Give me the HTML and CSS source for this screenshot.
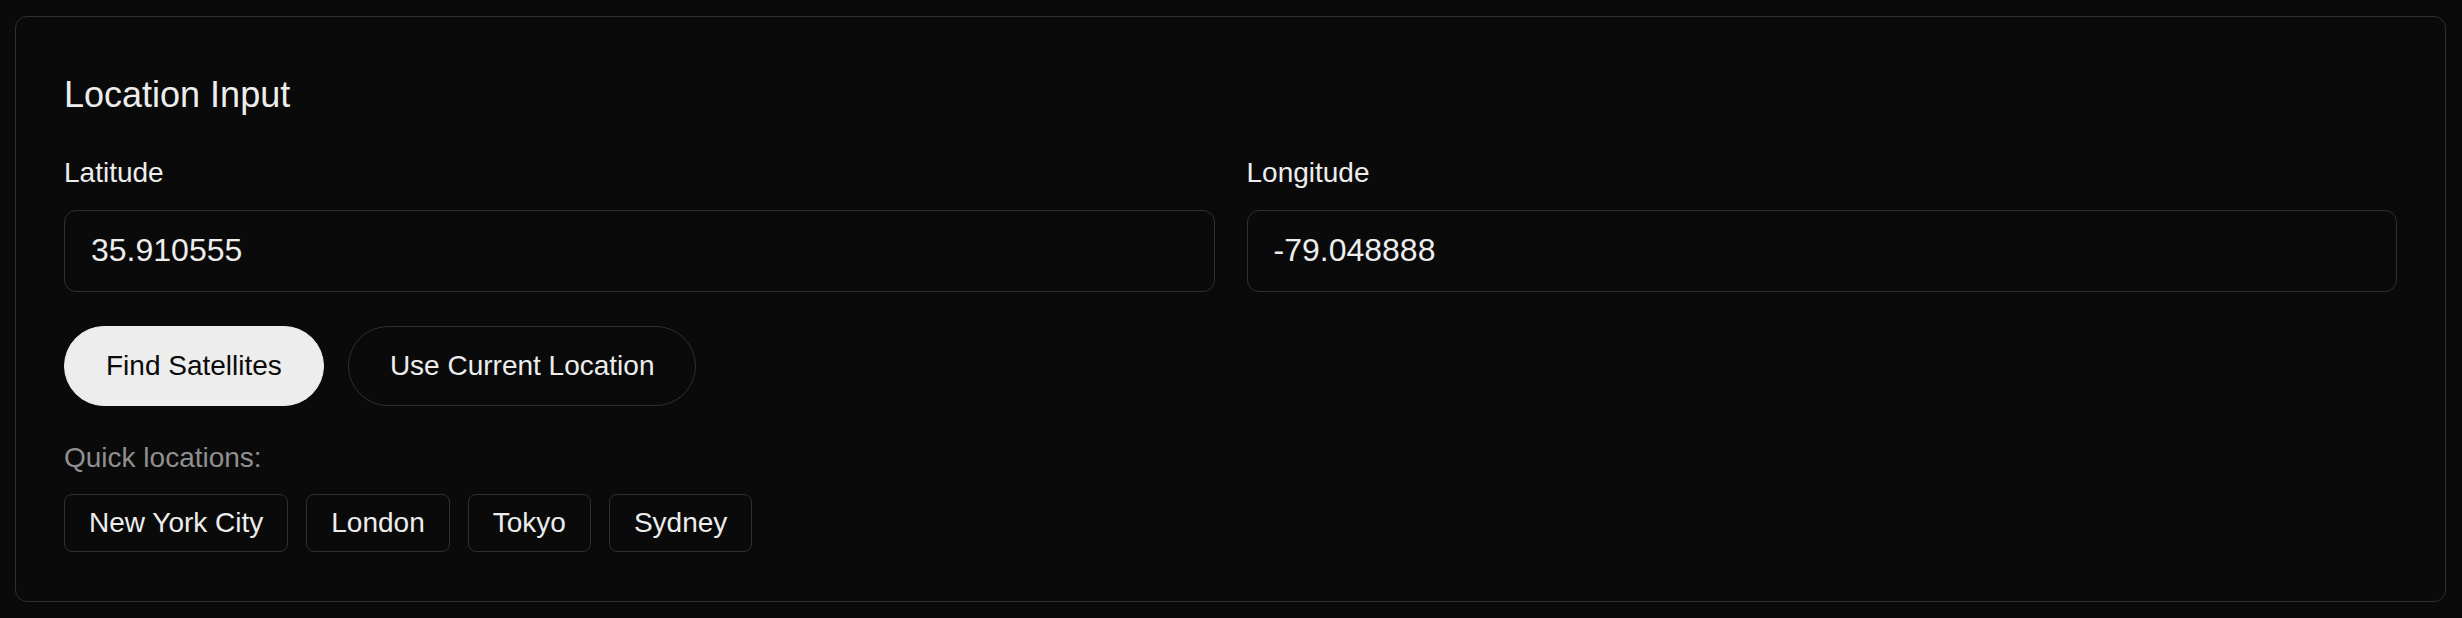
FILE: index.html
```html
<!DOCTYPE html>
<html lang="en">
<head>
<meta charset="utf-8">
<title>Location Input</title>
<link rel="stylesheet" href="styles.css">
</head>
<body>
  <section class="card">
    <h2 class="card-title">Location Input</h2>
    <div class="fields">
      <div class="field">
        <label class="field-label" for="lat">Latitude</label>
        <input class="field-input" id="lat" type="text" value="35.910555">
      </div>
      <div class="field">
        <label class="field-label" for="lon">Longitude</label>
        <input class="field-input" id="lon" type="text" value="-79.048888">
      </div>
    </div>
    <div class="actions">
      <button class="btn btn-primary" type="button">Find Satellites</button>
      <button class="btn btn-outline" type="button">Use Current Location</button>
    </div>
    <div class="quick">
      <p class="quick-label">Quick locations:</p>
      <div class="chips">
        <button class="chip" type="button">New York City</button>
        <button class="chip" type="button">London</button>
        <button class="chip" type="button">Tokyo</button>
        <button class="chip" type="button">Sydney</button>
      </div>
    </div>
  </section>
</body>
</html>
```

FILE: styles.css
```css
* { box-sizing: border-box; }

html, body {
  background: #0a0a0a;
}

body {
  margin: 0;
  padding: 16px 16px 15px 15px;
  font-family: "Liberation Sans", Arial, sans-serif;
  color: #ededed;
}

.card {
  border: 1px solid #303030;
  border-radius: 12px;
  background: #0a0a0a;
  padding: 56px 48px 49px 48px;
}

.card-title {
  margin: 0;
  font-size: 36px;
  font-weight: 400;
  line-height: 1.2;
  color: #ededed;
}

.fields {
  display: grid;
  grid-template-columns: 1fr 1fr;
  gap: 32px;
  margin-top: 40px;
}

.field {
  display: flex;
  flex-direction: column;
  gap: 20px;
}

.field-label {
  font-size: 28px;
  line-height: 1.2;
  color: #ededed;
}

.field-input {
  height: 82px;
  padding: 0 26px;
  border: 1px solid #303030;
  border-radius: 12px;
  background: #0a0a0a;
  color: #ededed;
  font-family: "Liberation Sans", Arial, sans-serif;
  font-size: 32px;
  outline: none;
}

.actions {
  display: flex;
  gap: 24px;
  margin-top: 34px;
}

.btn {
  font-family: "Liberation Sans", Arial, sans-serif;
  font-size: 28px;
  line-height: 32px;
  padding: 23px 41px;
  border-radius: 9999px;
  cursor: pointer;
}

.btn-primary {
  background: #ededed;
  color: #0a0a0a;
  border: 1px solid #ededed;
}

.btn-outline {
  background: #0a0a0a;
  color: #ededed;
  border: 1px solid #303030;
}

.quick {
  margin-top: 35px;
}

.quick-label {
  margin: 0;
  font-size: 28px;
  line-height: 1.2;
  color: #8f8f8f;
}

.chips {
  display: flex;
  gap: 18px;
  margin-top: 20px;
}

.chip {
  font-family: "Liberation Sans", Arial, sans-serif;
  font-size: 28px;
  line-height: 32px;
  padding: 12px 24px;
  border: 1px solid #303030;
  border-radius: 8px;
  background: #0a0a0a;
  color: #ededed;
  cursor: pointer;
}
```
